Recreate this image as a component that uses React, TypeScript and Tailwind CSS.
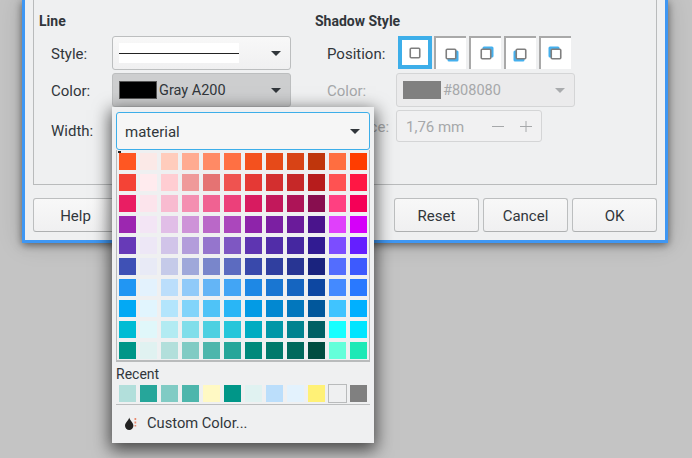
import React from "react";

const PALETTE = [
  ["#FF5722", "#FBE9E7", "#FFCCBC", "#FFAB91", "#FF8A65", "#FF7043", "#F4511E", "#E64A19", "#D84315", "#BF360C", "#FF6E40", "#FF3D00"],
  ["#F44336", "#FFEBEE", "#FFCDD2", "#EF9A9A", "#E57373", "#EF5350", "#E53935", "#D32F2F", "#C62828", "#B71C1C", "#FF5252", "#FF1744"],
  ["#E91E63", "#FCE4EC", "#F8BBD0", "#F48FB1", "#F06292", "#EC407A", "#D81B60", "#C2185B", "#AD1457", "#880E4F", "#FF4081", "#F50057"],
  ["#9C27B0", "#F3E5F5", "#E1BEE7", "#CE93D8", "#BA68C8", "#AB47BC", "#8E24AA", "#7B1FA2", "#6A1B9A", "#4A148C", "#E040FB", "#D500F9"],
  ["#673AB7", "#EDE7F6", "#D1C4E9", "#B39DDB", "#9575CD", "#7E57C2", "#5E35B1", "#512DA8", "#4527A0", "#311B92", "#7C4DFF", "#651FFF"],
  ["#3F51B5", "#E8EAF6", "#C5CAE9", "#9FA8DA", "#7986CB", "#5C6BC0", "#3949AB", "#303F9F", "#283593", "#1A237E", "#536DFE", "#3D5AFE"],
  ["#2196F3", "#E3F2FD", "#BBDEFB", "#90CAF9", "#64B5F6", "#42A5F5", "#1E88E5", "#1976D2", "#1565C0", "#0D47A1", "#448AFF", "#2979FF"],
  ["#03A9F4", "#E1F5FE", "#B3E5FC", "#81D4FA", "#4FC3F7", "#29B6F6", "#039BE5", "#0288D1", "#0277BD", "#01579B", "#40C4FF", "#00B0FF"],
  ["#00BCD4", "#E0F7FA", "#B2EBF2", "#80DEEA", "#4DD0E1", "#26C6DA", "#00ACC1", "#0097A7", "#00838F", "#006064", "#18FFFF", "#00E5FF"],
  ["#009688", "#E0F2F1", "#B2DFDB", "#80CBC4", "#4DB6AC", "#26A69A", "#00897B", "#00796B", "#00695C", "#004D40", "#64FFDA", "#1DE9B6"],
];

const RECENT = ["#B2DFDB", "#26A69A", "#80CBC4", "#4DB6AC", "#FFF9C4", "#009688", "#E0F2F1", "#BBDEFB", "#E3F2FD", "#FFF176", "", "#808080"];

// x/y offset of the blue square behind the gray one, per shadow position
const SHADOW_OFFSETS: ([number, number] | null)[] = [null, [2, 2], [2, -2], [-2, 2], [-2, -2]];

const Arrow: React.FC<{ disabled?: boolean }> = ({ disabled }) => (
  <svg width="10" height="5" viewBox="0 0 10 5" className="shrink-0">
    <path d="M0 0h10L5 5z" fill={disabled ? "#a9abad" : "#31363b"} />
  </svg>
);

const PositionButton: React.FC<{ offset: [number, number] | null; selected?: boolean }> = ({ offset, selected }) => (
  <div
    className={
      selected
        ? "mr-[-1px] h-[33px] w-[34px] bg-white border-4 border-[#3daee9] flex items-center justify-center"
        : "h-[33px] w-[32px] bg-white border-t-2 border-l-2 border-[#a9a9a9] flex items-center justify-center"
    }
  >
    <svg width="18" height="18" viewBox="0 0 18 18">
      {offset && <rect x={3.5 + offset[0]} y={3.5 + offset[1]} width="11" height="11" rx="1.5" fill="#45b0ee" />}
      <rect x="4.25" y="4.25" width="9.5" height="9.5" rx="1" fill="#fff" stroke="#7f7f7f" strokeWidth="1.6" />
    </svg>
  </div>
);

const DialogButton: React.FC<{ label: string; className: string }> = ({ label, className }) => (
  <div
    className={`h-[34px] rounded-[3px] border border-[#bcbebf] border-b-[#aeb0b1] bg-gradient-to-b from-[#f8f8f8] to-[#f0f0f1] flex items-center justify-center pt-[2px] text-[15px] text-[#31363b] ${className}`}
  >
    {label}
  </div>
);

const App: React.FC = () => {
  return (
    <div className="relative h-[458px] w-[692px] overflow-hidden bg-[#c4c4c4] font-['Roboto',sans-serif] text-[15px] text-[#31363b]">
      {/* dialog, its title is scrolled off the top */}
      <div className="ml-[22px] flex h-[243px] w-[646px] flex-col border-x-[3px] border-b-[3px] border-[#3f97f3] bg-[#eff0f1] px-[8px] shadow-[0_2px_8px_rgba(0,0,0,0.5),0_0_24px_rgba(0,0,0,0.15)]">
        <div className="flex h-[185px] shrink-0 border-x border-b border-[#b9bbbc] pl-[5px]">
          <div className="w-[276px] shrink-0 pt-[13px]">
            <div className="h-[23px] text-[14px] leading-[16px] font-bold">Line</div>
            <div className="flex flex-col gap-[3px]">
              <div className="flex h-[34px] items-center">
                <span className="w-[73px] pt-[2px] pl-[12px]">Style:</span>
                <div className="flex h-[34px] w-[179px] items-center justify-between rounded-[3px] border border-[#bcbebf] bg-gradient-to-b from-[#f8f8f8] to-[#f0f0f1] pr-[9px] pl-[6px]">
                  <div className="flex h-[20px] w-[120px] items-center bg-white">
                    <div className="h-px w-full bg-[#222]" />
                  </div>
                  <Arrow />
                </div>
              </div>
              <div className="flex h-[34px] items-center">
                <span className="w-[73px] pt-[2px] pl-[12px]">Color:</span>
                <div className="flex h-[34px] w-[179px] items-center justify-between rounded-[3px] border border-[#bcbebf] bg-[#cdcecf] pr-[9px] pl-[6px]">
                  <div className="flex items-center gap-[2px]">
                    <div className="h-[18px] w-[38px] border border-[#555] bg-black" />
                    <span className="pt-[2px] text-[14.5px]">Gray A200</span>
                  </div>
                  <Arrow />
                </div>
              </div>
              <div className="flex h-[34px] items-center pt-[9px]">
                <span className="w-[73px] pl-[12px]">Width:</span>
              </div>
            </div>
          </div>
          <div className="flex-1 pt-[13px]">
            <div className="h-[23px] text-[14px] leading-[16px] font-bold">Shadow Style</div>
            <div className="flex flex-col">
              <div className="flex h-[34px] items-center">
                <span className="w-[83px] pt-[2px] pl-[12px]">Position:</span>
                <div className="flex items-center gap-[3px] pb-px">
                  {SHADOW_OFFSETS.map((offset, i) => (
                    <PositionButton key={i} offset={offset} selected={i === 0} />
                  ))}
                </div>
              </div>
              <div className="mt-[3px] flex h-[34px] items-center text-[#a6a8aa]">
                <span className="w-[81px] pt-[2px] pl-[12px]">Color:</span>
                <div className="flex h-[34px] w-[179px] items-center justify-between rounded-[3px] border border-[#d4d5d6] bg-[#ebebec] pr-[9px] pl-[6px]">
                  <div className="flex items-center gap-[2px]">
                    <div className="h-[18px] w-[38px] bg-[#808080]" />
                    <span className="pt-[2px] text-[14.5px]">#808080</span>
                  </div>
                  <Arrow disabled />
                </div>
              </div>
              <div className="mt-[3px] flex h-[32px] items-center text-[#a6a8aa]">
                <span className="w-[81px] pt-[2px] pl-[12px]">Distance:</span>
                <div className="flex h-[32px] w-[146px] items-center justify-between rounded-[3px] border border-[#d4d5d6] bg-[#f1f1f2] pr-[4px] pl-[9px]">
                  <span className="pt-[2px]">1,76 mm</span>
                  <div className="flex items-center gap-[16px] pr-[5px]">
                    <svg width="12" height="12" viewBox="0 0 12 12">
                      <path d="M0 6.500h12" stroke="#a6a8aa" />
                    </svg>
                    <svg width="12" height="12" viewBox="0 0 12 12">
                      <path d="M0 6.500h12M6 1v11" stroke="#a6a8aa" />
                    </svg>
                  </div>
                </div>
              </div>
            </div>
          </div>
        </div>
        <div className="flex pt-[13px]">
          <DialogButton label="Help" className="w-[85px]" />
          <div className="flex-1" />
          <div className="flex gap-[4px]">
            <DialogButton label="Reset" className="w-[85px]" />
            <DialogButton label="Cancel" className="w-[85px]" />
            <DialogButton label="OK" className="w-[85px]" />
          </div>
        </div>
      </div>

      {/* color popup */}
      <div className="absolute top-[107px] left-[112px] flex h-[336px] w-[262px] flex-col bg-[#eff0f1] px-[4px] pt-[5px] shadow-[0_5px_16px_2px_rgba(0,0,0,0.65)]">
        <div className="flex h-[38px] shrink-0 items-center justify-between rounded-[3px] border border-[#3daee9] bg-[#f6f6f6] pr-[9px] pl-[8px]">
          <span className="pt-[2px]">material</span>
          <Arrow />
        </div>
        <div className="relative flex h-[212px] flex-col gap-[4px] border-x border-b-2 border-[#b9bbbc] pt-[3px] pl-[2px]">
          <div className="absolute top-px left-px h-[2px] w-[3px] bg-[#222]" />
          {PALETTE.map((row, r) => (
            <div key={r} className="flex gap-[4px]">
              {row.map((color, c) => (
                <div key={c} className="h-[17px] w-[17px]" style={{ backgroundColor: color }} />
              ))}
            </div>
          ))}
        </div>
        <div className="h-[22px] pt-[3px] text-[14px] leading-[18px]">Recent</div>
        <div className="flex h-[19px] items-center gap-[4px] pl-[3px]">
          {RECENT.map((color, i) =>
            color ? (
              <div key={i} className="h-[17px] w-[17px]" style={{ backgroundColor: color }} />
            ) : (
              <div key={i} className="-mx-px h-[19px] w-[19px] border border-[#b9bbbc] bg-[#eff0f1]" />
            ),
          )}
        </div>
        <div className="mt-[1px] h-px bg-[#bcbebf]" />
        <div className="flex h-[36px] items-center gap-[10px] pl-[9px]">
          <svg width="12" height="13" viewBox="0 0 12 13" className="shrink-0">
            <path d="M4.200 0.500C3.800 3.500 0 5.500 0 8.700a4.200 4.200 0 0 0 8.400 0C8.400 5.500 4.800 3.500 4.200 0.500z" fill="#222" />
            <path d="M9.500 1h1.700v2H9.500zM9.500 4.500h1.700v2H9.500zM9.500 8h1.700v1.500H9.500z" fill="#e9896f" />
          </svg>
          <span className="text-[14.7px]">Custom Color...</span>
        </div>
      </div>
    </div>
  );
};

export default App;
